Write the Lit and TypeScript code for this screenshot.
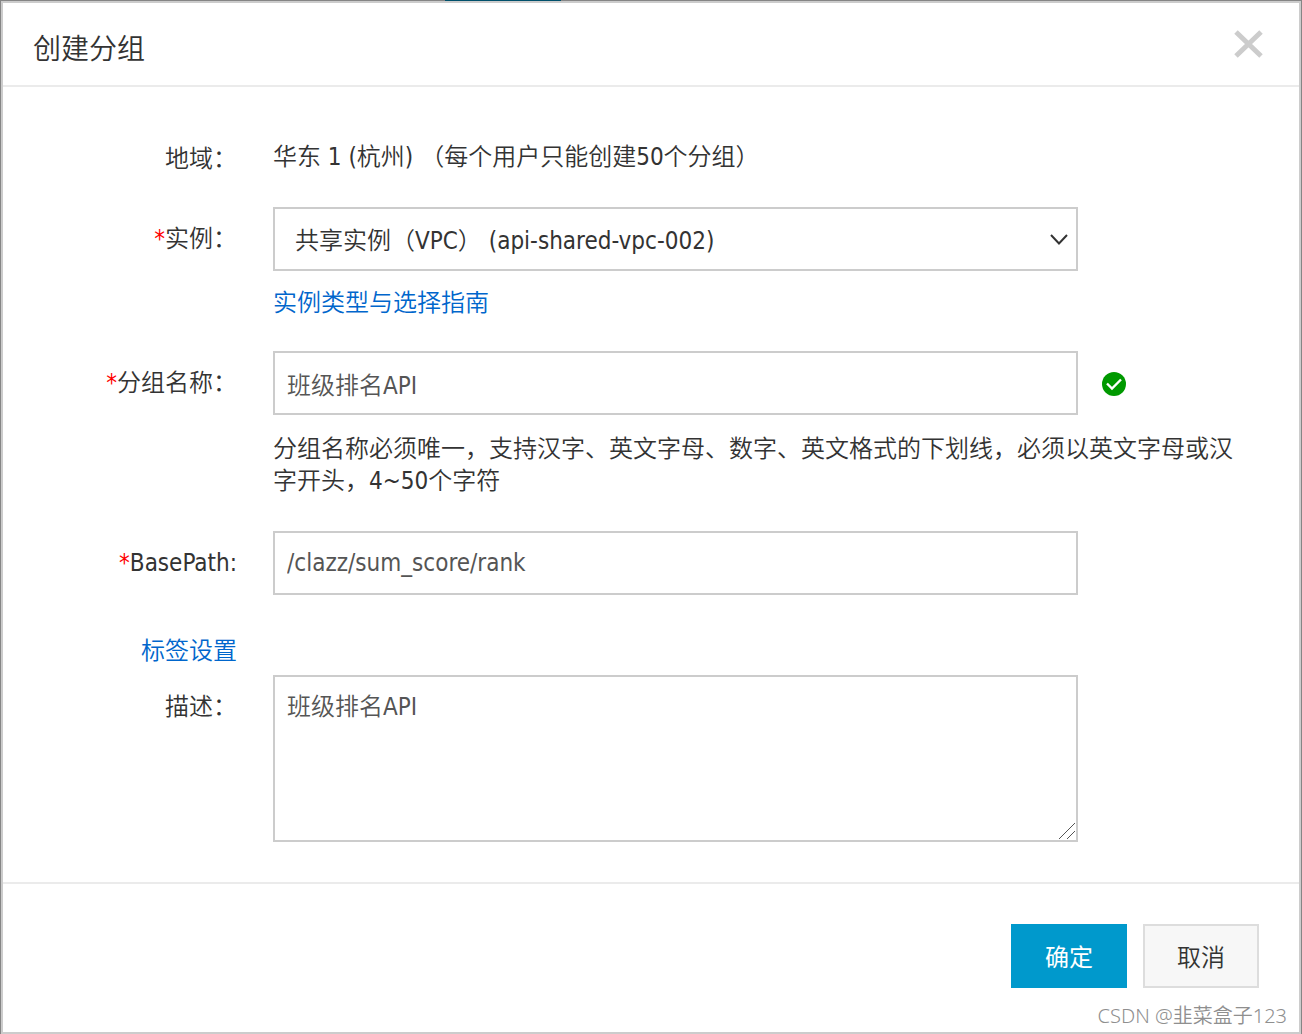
import { LitElement, html, css } from "lit";
import { customElement, state } from "lit/decorators.js";

@customElement("app-root")
export class AppRoot extends LitElement {
  static styles = css`
    :host {
      display: block;
      box-sizing: border-box;
      min-height: 100vh;
      padding: 1px 1px 0;
      background: linear-gradient(#00506b, #00506b) 37.5% 0 / 116px 1px no-repeat, #858585;
      font-family: "DejaVu Sans Condensed", "Noto Sans CJK SC", sans-serif;
      font-size: 24px;
      font-weight: 350;
      line-height: 32px;
      color: #333;
    }
    *,
    *::before {
      box-sizing: border-box;
    }
    .dialog {
      position: relative;
      display: flex;
      flex-direction: column;
      min-height: calc(100vh - 1px);
      border: 2px solid #ccc;
      background: #fff;
    }
    .header {
      display: flex;
      align-items: center;
      justify-content: space-between;
      min-height: 84px;
      padding: 0 36px 0 30px;
      border-bottom: 2px solid #ebebeb;
    }
    .title {
      margin: 12px 0 0;
      font-size: 28px;
      line-height: 40px;
      font-weight: 350;
    }
    .close {
      display: flex;
      padding: 0;
      border: 0;
      background: none;
      cursor: pointer;
    }
    .form {
      flex: 1;
      display: flex;
      flex-direction: column;
      padding: 40px 60px 40px 0;
    }
    .row {
      display: grid;
      grid-template-columns: 234px minmax(0, 1fr);
      column-gap: 36px;
      margin-bottom: 32px;
    }
    .row.last {
      margin-bottom: 0;
    }
    .row.spaced {
      margin-bottom: 40px;
    }
    .row.tight {
      margin-bottom: 8px;
    }
    .label {
      padding-top: 16px;
      text-align: right;
    }
    .tags {
      text-align: right;
    }
    .star {
      color: #f00;
    }
    .static {
      padding-top: 14px;
    }
    .line {
      display: flex;
      align-items: center;
      gap: 24px;
    }
    .box {
      position: relative;
      display: flex;
      width: calc(100% * 5 / 6);
    }
    .control {
      width: 100%;
      height: 64px;
      margin: 0;
      padding: 0 12px;
      border: 2px solid #ccc;
      border-radius: 0;
      background: #fff;
      font: inherit;
      color: #555;
      outline: 0;
    }
    .control:focus-visible {
      border-color: #0099cc;
    }
    .select {
      appearance: none;
      padding: 4px 48px 0 20px;
      color: #333;
    }
    .area {
      height: 167px;
      padding: 14px 12px;
      resize: vertical;
    }
    .area::-webkit-resizer {
      display: none;
    }
    .chevron {
      position: absolute;
      right: 9px;
      top: 26px;
      pointer-events: none;
    }
    .grip {
      position: absolute;
      right: 2px;
      bottom: 2px;
      pointer-events: none;
    }
    .hint {
      margin: 16px 0 0;
    }
    .hint.long {
      margin: 18px 0 2px;
    }
    .link {
      color: #0066cc;
      text-decoration: none;
    }
    .footer {
      display: flex;
      justify-content: flex-end;
      gap: 16px;
      padding: 40px 40px 44px;
      border-top: 2px solid #ebebeb;
    }
    .button {
      min-width: 116px;
      height: 64px;
      padding: 4px 32px 0;
      border: 2px solid #ddd;
      background: #f7f7f7;
      font: inherit;
      color: #333;
      cursor: pointer;
    }
    .button.primary {
      border-color: #0099cc;
      background: #0099cc;
      color: #fff;
      font-weight: 400;
    }
    .watermark {
      position: absolute;
      right: 12px;
      bottom: 3px;
      font-family: "Noto Sans", "Noto Sans CJK SC", sans-serif;
      font-size: 20px;
      line-height: 26px;
      color: #8f8f8f;
    }
  `;

  @state() private groupName = "班级排名API";
  @state() private basePath = "/clazz/sum_score/rank";
  @state() private description = "班级排名API";

  private star() {
    return html`<span class="star">*</span>`;
  }

  render() {
    return html`
      <section class="dialog" role="dialog" aria-labelledby="title">
        <header class="header">
          <h1 class="title" id="title">创建分组</h1>
          <button class="close" type="button" aria-label="关闭">
            <svg width="29" height="29" viewBox="0 0 29 29" fill="none" stroke="#ccc" stroke-width="5">
              <path d="M2 2L27 26M27 2L2 26" />
            </svg>
          </button>
        </header>

        <form class="form" id="form" @submit=${(e: Event) => e.preventDefault()}>
          <div class="row">
            <span class="label">地域：</span>
            <div class="static">华东 1 (杭州) （每个用户只能创建50个分组）</div>
          </div>

          <div class="row">
            <label class="label" for="instance">${this.star()}实例：</label>
            <div>
              <div class="box">
                <select class="control select" id="instance">
                  <option>共享实例（VPC） (api-shared-vpc-002)</option>
                </select>
                <svg class="chevron" width="20" height="14" viewBox="0 0 20 14" fill="none" stroke="#333" stroke-width="2">
                  <path d="M2 2L10 10.500L18 2" />
                </svg>
              </div>
              <p class="hint"><a class="link" href="#guide">实例类型与选择指南</a></p>
            </div>
          </div>

          <div class="row">
            <label class="label" for="name">${this.star()}分组名称：</label>
            <div>
              <div class="line">
                <div class="box">
                  <input
                    class="control"
                    id="name"
                    type="text"
                    .value=${this.groupName}
                    @input=${(e: Event) => (this.groupName = (e.target as HTMLInputElement).value)}
                  />
                </div>
                <svg width="25" height="26" viewBox="0 0 25 26" role="img" aria-label="有效">
                  <circle cx="12" cy="14" r="12" fill="#090" />
                  <path d="M5 13.500L10 18.500L19 9.500" fill="none" stroke="#fff" stroke-width="2.400" />
                </svg>
              </div>
              <p class="hint long">
                分组名称必须唯一，支持汉字、英文字母、数字、英文格式的下划线，必须以英文字母或汉字开头，4~50个字符
              </p>
            </div>
          </div>

          <div class="row spaced">
            <label class="label" for="path">${this.star()}BasePath:</label>
            <div class="box">
              <input
                class="control"
                id="path"
                type="text"
                .value=${this.basePath}
                @input=${(e: Event) => (this.basePath = (e.target as HTMLInputElement).value)}
              />
            </div>
          </div>

          <div class="row tight">
            <div class="tags"><a class="link" href="#tags">标签设置</a></div>
          </div>

          <div class="row last">
            <label class="label" for="desc">描述：</label>
            <div class="box">
              <textarea
                class="control area"
                id="desc"
                .value=${this.description}
                @input=${(e: Event) => (this.description = (e.target as HTMLTextAreaElement).value)}
              ></textarea>
              <svg class="grip" width="18" height="18" viewBox="0 0 18 18" fill="none" stroke="#555" stroke-width="1">
                <path d="M1 17L17 1M9 17L17 9" />
              </svg>
            </div>
          </div>
        </form>

        <footer class="footer">
          <button class="button primary" type="submit" form="form">确定</button>
          <button class="button" type="button">取消</button>
        </footer>
        <span class="watermark">CSDN @韭菜盒子123</span>
      </section>
    `;
  }
}
